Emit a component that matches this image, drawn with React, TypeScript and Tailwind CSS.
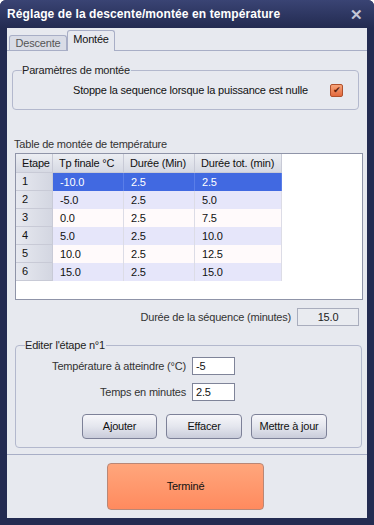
import React from "react";

const ROWS = [
  { step: "1", temp: "-10.0", dur: "2.5", tot: "2.5" },
  { step: "2", temp: "-5.0", dur: "2.5", tot: "5.0" },
  { step: "3", temp: "0.0", dur: "2.5", tot: "7.5" },
  { step: "4", temp: "5.0", dur: "2.5", tot: "10.0" },
  { step: "5", temp: "10.0", dur: "2.5", tot: "12.5" },
  { step: "6", temp: "15.0", dur: "2.5", tot: "15.0" },
];

function GroupBox({ label, className, children }: { label: string; className: string; children: React.ReactNode }) {
  return (
    <div className={`relative rounded-[4px] border border-[#b3b8cd] ${className}`}>
      <span className="absolute left-[9px] top-[-8px] bg-[#e7e9ef] pr-[1px] text-[11px] leading-[14px] text-[#222]">
        {label}
      </span>
      {children}
    </div>
  );
}

function Btn({ label, w }: { label: string; w: string }) {
  return (
    <button
      className={`${w} h-[25px] rounded-[4px] border border-[#7d8198] bg-gradient-to-b from-[#f7f7fa] via-[#e4e6ee] to-[#c9ccda] text-[11px] tracking-[-0.2px] text-[#111]`}
    >
      {label}
    </button>
  );
}

export default function App() {
  return (
    <div
      className="w-[374px] h-[525px] bg-[#232b51] rounded-t-[6px] flex flex-col"
      style={{ fontFamily: '"Liberation Sans", Arial, sans-serif' }}
    >
      {/* Title bar */}
      <div className="h-[28px] shrink-0 flex items-center justify-between px-[7px] rounded-t-[6px] bg-gradient-to-b from-[#3a4474] to-[#232b51]">
        <span className="text-white font-bold text-[12px] tracking-[0.1px]">
          Réglage de la descente/montée en température
        </span>
        <span className="text-[#c3c7d6] font-bold text-[15px] leading-none mr-[4px]">✕</span>
      </div>

      {/* Client area */}
      <div className="mx-[7px] h-[490px] bg-[#e7e9ef] flex flex-col text-[11px] tracking-[-0.2px] text-[#111]">
        {/* Tabs */}
        <div className="h-[22px] flex items-end pl-[2px]">
          <div className="w-[58px] h-[15px] border border-b-0 border-[#a8aec6] rounded-t-[3px] bg-[#d9dce6] text-[#555] flex items-center justify-center leading-none">
            Descente
          </div>
          <div className="relative z-10 -mb-px w-[48px] h-[21px] border border-b-0 border-[#a8aec6] rounded-t-[3px] bg-[#e7e9ef] text-[#111] flex items-start justify-center pt-[3px] leading-none">
            Montée
          </div>
        </div>

        {/* Tab panel */}
        <div className="border-t border-b border-[#a8aec6] flex flex-col pb-[6px]">
          <GroupBox label="Paramètres de montée" className="ml-[5px] mt-[19px] w-[347px] h-[40px] flex items-center">
            <span className="ml-[60px] text-[11px]">Stoppe la sequence lorsque la puissance est nulle</span>
            <span className="ml-auto mr-[15px] w-[13px] h-[13px] rounded-[2px] border border-[#b0502c] bg-gradient-to-b from-[#f6a47a] to-[#e2683c] flex items-center justify-center text-[9px] leading-none text-[#5a200c]">
              ✔
            </span>
          </GroupBox>

          <div className="ml-[7px] mt-[27px] h-[14px] leading-[14px] text-[#333]">Table de montée de température</div>

          {/* Grid */}
          <div className="ml-[8px] mt-[2px] w-[348px] h-[147px] border border-[#8f94a8] bg-white">
            <div className="flex h-[19px]">
              {[
                { t: "Etape", w: "w-[37px]" },
                { t: "Tp finale °C", w: "w-[71px]" },
                { t: "Durée (Min)", w: "w-[71px]" },
                { t: "Durée tot. (min)", w: "w-[87px]" },
              ].map((h) => (
                <div
                  key={h.t}
                  className={`${h.w} h-full flex items-center pl-[6px] border-r border-b border-[#c8cad6] bg-gradient-to-b from-[#eceef3] to-[#d6d9e3]`}
                >
                  {h.t}
                </div>
              ))}
            </div>
            {ROWS.map((r, i) => {
              const sel = i === 0;
              const bg = sel ? "bg-[#4169e1] text-white" : i % 2 === 1 ? "bg-[#e6e6fa]" : "bg-[#fffafb]";
              return (
                <div key={r.step} className="flex h-[18px]">
                  <div className="w-[37px] h-full flex items-center pl-[6px] border-r border-b border-[#c8cad6] bg-gradient-to-r from-[#e7e9f0] to-[#d3d6e1]">
                    {r.step}
                  </div>
                  {[
                    { v: r.temp, w: "w-[71px]" },
                    { v: r.dur, w: "w-[71px]" },
                    { v: r.tot, w: "w-[87px]" },
                  ].map((c, j) => (
                    <div
                      key={j}
                      className={`${c.w} ${bg} h-full flex items-center pl-[7px] border-r ${sel ? "border-[#5a7ee8]" : "border-[#dcdce6]"}`}
                    >
                      {c.v}
                    </div>
                  ))}
                </div>
              );
            })}
          </div>

          {/* Sequence duration */}
          <div className="mt-[8px] h-[18px] flex items-center justify-end pr-[8px]">
            <span className="text-[#333] mr-[6px]">Durée de la séquence (minutes)</span>
            <div className="w-[62px] h-[18px] border border-[#a9adbd] bg-[#e9ebf0] flex items-center justify-center text-[#222]">
              15.0
            </div>
          </div>

          <GroupBox label="Editer l'étape n°1" className="ml-[8px] mt-[19px] w-[347px] h-[103px] flex flex-col">
            <div className="mt-[11px] flex items-center h-[18px]">
              <span className="w-[170px] text-right text-[#333]">Température à atteindre (°C)</span>
              <div className="ml-[6px] w-[43px] h-[18px] border border-[#7f8499] bg-white flex items-center pl-[3px]">-5</div>
            </div>
            <div className="mt-[8px] flex items-center h-[18px]">
              <span className="w-[170px] text-right text-[#333]">Temps en minutes</span>
              <div className="ml-[6px] w-[43px] h-[18px] border border-[#7f8499] bg-white flex items-center pl-[3px]">2.5</div>
            </div>
            <div className="mt-[13px] ml-[66px] flex gap-[9px]">
              <Btn label="Ajouter" w="w-[75px]" />
              <Btn label="Effacer" w="w-[76px]" />
              <Btn label="Mettre à jour" w="w-[76px]" />
            </div>
          </GroupBox>
        </div>

        <button className="mt-[8px] ml-[100px] w-[157px] h-[47px] rounded-[4px] border border-[#b98776] bg-gradient-to-b from-[#ffa67c] to-[#ff8a5e] text-[11px] text-[#111]">
          Terminé
        </button>
      </div>
    </div>
  );
}
